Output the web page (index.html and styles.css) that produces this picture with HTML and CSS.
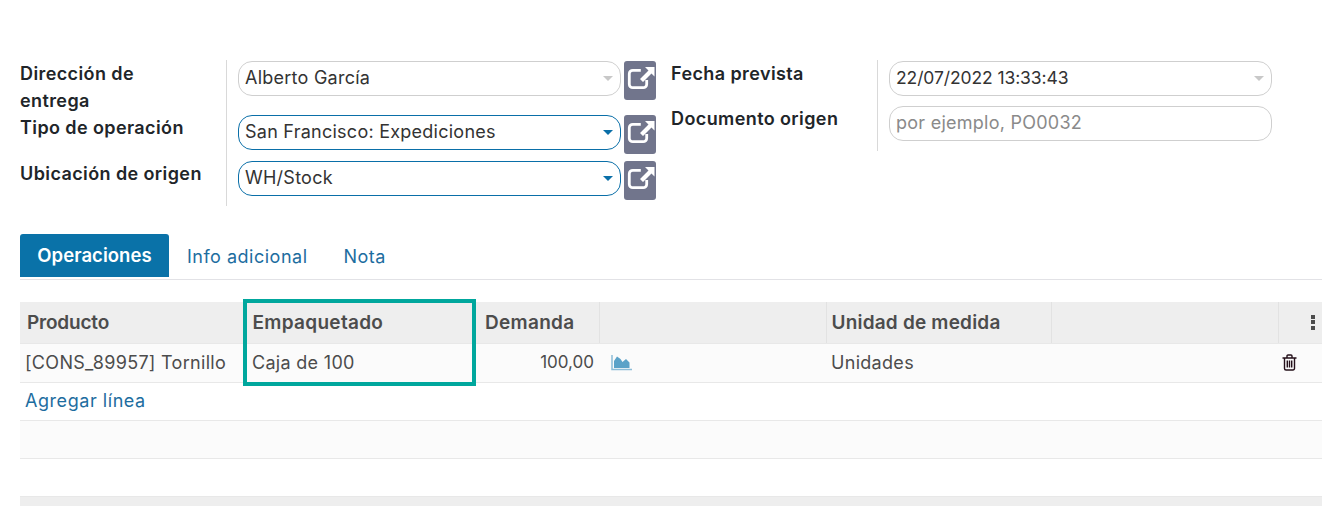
FILE: index.html
```html
<!DOCTYPE html>
<html>
  <head>
    <title>Transferencia</title>
    <link rel="stylesheet" href="styles.css">
  </head>
  <body>
    <main class="sheet">
      <section class="form-group">
        <div class="form-col form-col-left">
          <div class="field-row row-tall">
            <div class="field-label">Dirección de entrega</div>
            <div class="field-value">
              <div class="input"><span class="input-text">Alberto García</span><span class="caret"></span></div>
              <a class="ext-btn"><svg viewBox="0 0 32 39"><path class="ext-box" d="M22.700 19v4.200a3.500 3.500 0 0 1-3.500 3.500h-10.400a3.500 3.500 0 0 1-3.500-3.500v-10.400a3.500 3.500 0 0 1 3.500-3.500h8"/><path class="ext-arrow" d="M21 6h9.500v9.500l-3-3-8.500 8.500-3-3 8.500-8.500z"/></svg></a>
            </div>
          </div>
          <div class="field-row">
            <div class="field-label">Tipo de operación</div>
            <div class="field-value">
              <div class="input input-active"><span class="input-text">San Francisco: Expediciones</span><span class="caret"></span></div>
              <a class="ext-btn"><svg viewBox="0 0 32 39"><path class="ext-box" d="M22.700 19v4.200a3.500 3.500 0 0 1-3.500 3.500h-10.400a3.500 3.500 0 0 1-3.500-3.500v-10.400a3.500 3.500 0 0 1 3.500-3.500h8"/><path class="ext-arrow" d="M21 6h9.500v9.500l-3-3-8.500 8.500-3-3 8.500-8.500z"/></svg></a>
            </div>
          </div>
          <div class="field-row">
            <div class="field-label">Ubicación de origen</div>
            <div class="field-value">
              <div class="input input-active"><span class="input-text">WH/Stock</span><span class="caret"></span></div>
              <a class="ext-btn"><svg viewBox="0 0 32 39"><path class="ext-box" d="M22.700 19v4.200a3.500 3.500 0 0 1-3.500 3.500h-10.400a3.500 3.500 0 0 1-3.500-3.500v-10.400a3.500 3.500 0 0 1 3.500-3.500h8"/><path class="ext-arrow" d="M21 6h9.500v9.500l-3-3-8.500 8.500-3-3 8.500-8.500z"/></svg></a>
            </div>
          </div>
        </div>
        <div class="form-col form-col-right">
          <div class="field-row row-short">
            <div class="field-label">Fecha prevista</div>
            <div class="field-value">
              <div class="input"><span class="input-text date-text">22/07/2022 13:33:43</span><span class="caret"></span></div>
            </div>
          </div>
          <div class="field-row">
            <div class="field-label">Documento origen</div>
            <div class="field-value">
              <div class="input"><span class="input-text placeholder">por ejemplo, PO0032</span></div>
            </div>
          </div>
        </div>
      </section>

      <nav class="tabs">
        <a class="tab tab-active">Operaciones</a>
        <a class="tab">Info adicional</a>
        <a class="tab">Nota</a>
      </nav>

      <section class="lines">
        <table class="lines-table">
          <colgroup>
            <col class="c-product">
            <col class="c-package">
            <col class="c-demand">
            <col class="c-chart">
            <col class="c-uom">
            <col class="c-empty">
            <col class="c-opts">
          </colgroup>
          <thead>
            <tr>
              <th>Producto</th>
              <th>Empaquetado</th>
              <th class="demand-head">Demanda</th>
              <th></th>
              <th class="uom-head">Unidad de medida</th>
              <th></th>
              <th class="opts"><span class="kebab"><i></i><i></i><i></i></span></th>
            </tr>
          </thead>
          <tbody>
            <tr class="odd first-row">
              <td>[CONS_89957] Tornillo</td>
              <td class="package">Caja de 100</td>
              <td class="num">100,00</td>
              <td class="chart-cell">
                <svg class="chart-icon" width="22" height="17" viewBox="0 0 22 17"><path class="chart-fill" d="M3 14V7l3-4.500 3.500 2.500 2 3 3.500-3 3.500 3.500V14z"/><path class="chart-axis" d="M1 1v14.500h20"/></svg>
              </td>
              <td>Unidades</td>
              <td></td>
              <td class="trash-cell">
                <svg class="trash-icon" width="15" height="17" viewBox="0 0 15 17"><path d="M.5 4h14M2.500 4v10.500a1.500 1.500 0 0 0 1.500 1.500h7a1.500 1.500 0 0 0 1.500-1.500V4M5 4V2a1 1 0 0 1 1-1h3a1 1 0 0 1 1 1v2M5.300 6.500v7M7.500 6.500v7M9.700 6.500v7"/></svg>
              </td>
            </tr>
            <tr>
              <td colspan="7"><a class="add-line">Agregar línea</a></td>
            </tr>
            <tr class="odd"><td colspan="7"></td></tr>
            <tr><td colspan="7"></td></tr>
          </tbody>
          <tfoot>
            <tr><td colspan="7"></td></tr>
          </tfoot>
        </table>
        <div class="highlight"></div>
      </section>
    </main>
  </body>
</html>
```

FILE: styles.css
```css
/* Basic styling for the page */
body {
  font-family: Inter, "Open Sans", sans-serif;
  font-size: 16px;
  color: #4c4c4c;
  margin: 0;
  padding: 0;
  background-color: #fff;
}
a {
  color: #1d6d9f;
  text-decoration: none;
}
.sheet {
  padding: 60px 15px 0 20px;
}

/* form header */
.form-group {
  display: flex;
  gap: 15px;
}
.form-col-left {
  width: 636px;
}
.form-col-right {
  width: 601px;
}
.field-row {
  display: flex;
  height: 46px;
}
.row-tall {
  height: 54px;
}
.row-short {
  height: 45px;
}
.field-label {
  width: 207px;
  box-sizing: border-box;
  padding: 0 20px 1px 0;
  border-right: 1px solid #d9d9d9;
  color: #212529;
  font-weight: 600;
  font-size: 18px;
  letter-spacing: .4px;
  line-height: 27px;
}
.field-value {
  display: flex;
  align-items: flex-start;
  gap: 3px;
  padding: 1px 0 0 11px;
}
.input {
  display: flex;
  align-items: center;
  box-sizing: border-box;
  width: 383px;
  height: 35px;
  padding: 0 7px 2px 6px;
  border: 1px solid #cfcfcf;
  border-radius: 14px;
  color: #333;
  font-size: 18px;
  letter-spacing: .25px;
}
.input-active {
  border-color: #0a6fa8;
}
.input-text {
  flex: 1;
  white-space: nowrap;
}
.date-text {
  font-size: 17.500px;
  letter-spacing: -.1px;
}
.placeholder {
  color: #8a8a8a;
}
.caret {
  width: 0;
  height: 0;
  margin-top: 2px;
  border-left: 5.500px solid transparent;
  border-right: 5.500px solid transparent;
  border-top: 5.500px solid #c8c8c8;
}
.input-active .caret {
  border-top-color: #0a6fa8;
}
.ext-btn {
  display: block;
  width: 32px;
  height: 39px;
  border-radius: 3px;
  background-color: #71758c;
}
.ext-btn svg {
  display: block;
  width: 32px;
  height: 39px;
}
.ext-box {
  fill: none;
  stroke: #fff;
  stroke-width: 2.800;
}
.ext-arrow {
  fill: #fff;
}

/* tabs */
.tabs {
  display: flex;
  margin-top: 28px;
  height: 46px;
  box-sizing: border-box;
  border-bottom: 1px solid #e2e2e6;
}
.tab {
  display: flex;
  align-items: center;
  height: 43px;
  padding: 2px 18px 0 18px;
  box-sizing: border-box;
  font-size: 18px;
  letter-spacing: .5px;
}
.tab-active {
  width: 149px;
  padding: 0 0 1px 0;
  justify-content: center;
  border-radius: 3px 3px 0 0;
  background-color: #0a72a8;
  color: #fff;
  font-weight: 600;
  font-size: 18.500px;
  letter-spacing: .05px;
}

/* order lines */
.lines {
  position: relative;
  margin-top: 22px;
}
.lines-table {
  border-collapse: collapse;
  table-layout: fixed;
  width: 1302px;
}
.c-product { width: 226px; }
.c-package { width: 233px; }
.c-demand { width: 120px; }
.c-chart { width: 227px; }
.c-uom { width: 225px; }
.c-empty { width: 227px; }
.c-opts { width: 44px; }
.lines-table th {
  height: 41px;
  padding: 0 6px;
  box-sizing: border-box;
  border-left: 1px solid #e2e2e2;
  border-bottom: 1px solid #e8e8e8;
  background-color: #eee;
  color: #4c4c4c;
  font-weight: 600;
  font-size: 19px;
  letter-spacing: .3px;
  text-align: left;
}
.lines-table th:first-child {
  padding-left: 7px;
  letter-spacing: -.2px;
  border-left: 0;
}
.lines-table th.demand-head {
  border-left: 0;
}
.lines-table th.uom-head {
  padding-left: 5px;
  letter-spacing: .2px;
}
.lines-table td {
  height: 38px;
  padding: 0 5px 1px 5px;
  box-sizing: border-box;
  border-bottom: 1px solid #e8e8e8;
  font-size: 18px;
  letter-spacing: .3px;
  white-space: nowrap;
  overflow: hidden;
}
.lines-table .first-row td {
  height: 39px;
}
.lines-table td.package {
  padding-left: 6px;
}
.lines-table .odd td {
  background-color: #fbfbfb;
}
.lines-table tfoot td {
  height: 10px;
  padding: 0;
  border: 0;
  background-color: #eee;
}
.lines-table td.num {
  text-align: right;
  font-size: 17px;
  letter-spacing: 0;
}
.add-line {
  letter-spacing: .55px;
}
.chart-cell {
  line-height: 0;
}
.chart-icon {
  margin-left: 7px;
}
.chart-fill {
  fill: #5ba2c8;
}
.chart-axis {
  fill: none;
  stroke: #8dbdd8;
  stroke-width: 1.500;
}
.trash-cell {
  line-height: 0;
}
.trash-icon {
  margin-left: -1px;
  fill: none;
  stroke: #24101a;
  stroke-width: 1.400;
}
.opts {
  line-height: 0;
}
.kebab {
  display: flex;
  flex-direction: column;
  gap: 1.500px;
  align-items: flex-end;
  padding-right: 1px;
}
.kebab i {
  display: block;
  width: 4px;
  height: 4px;
  background-color: #4c4c4c;
}
.highlight {
  position: absolute;
  left: 223px;
  top: -3px;
  width: 233px;
  height: 87px;
  box-sizing: border-box;
  border: 4px solid #00a79d;
}
```
